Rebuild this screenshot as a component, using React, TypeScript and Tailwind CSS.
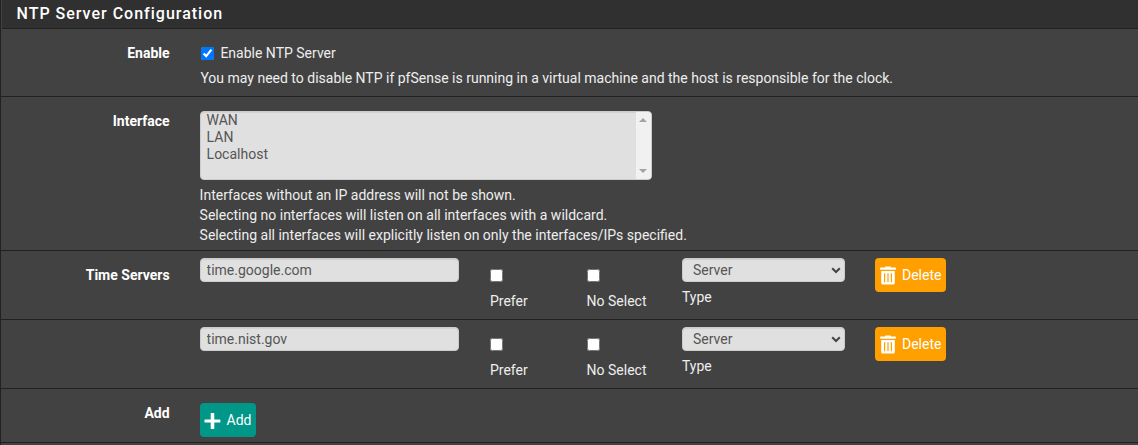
import type { ReactNode } from "react";

const field =
  "border border-[#cccccc] bg-[#e0e0e0] text-[#555555] rounded-[4px] shadow-[inset_0_1px_1px_rgba(0,0,0,0.075)]";

function TrashIcon() {
  return (
    <svg viewBox="0 0 16 19" className="mt-px h-[19px] w-4" fill="currentColor">
      <path
        fillRule="evenodd"
        d="M5 1.4 L5.4 0.6 H10.6 L11 1.4 H15.4 A0.5 0.5 0 0 1 15.9 1.9 V3.3 A0.4 0.4 0 0 1 15.5 3.7 H0.5 A0.4 0.4 0 0 1 0.1 3.3 V1.9 A0.5 0.5 0 0 1 0.6 1.4 Z M1.2 4.9 H14.8 V16.9 A1.7 1.7 0 0 1 13.1 18.6 H2.9 A1.7 1.7 0 0 1 1.2 16.9 Z M4 7.2 V16.2 H5.2 V7.2 Z M7.4 7.2 V16.2 H8.6 V7.2 Z M10.8 7.2 V16.2 H12 V7.2 Z"
      />
    </svg>
  );
}

function PlusIcon() {
  return (
    <svg viewBox="0 0 17 16" className="mt-[2px] h-4 w-[17px]" fill="currentColor">
      <path d="M7.3 0 H9.7 A0.6 0.6 0 0 1 10.3 0.6 V6.4 H15.8 A0.6 0.6 0 0 1 16.4 7 V9 A0.6 0.6 0 0 1 15.8 9.6 H10.3 V15.4 A0.6 0.6 0 0 1 9.7 16 H7.3 A0.6 0.6 0 0 1 6.7 15.4 V9.6 H1.1 A0.6 0.6 0 0 1 0.5 9 V7 A0.6 0.6 0 0 1 1.1 6.4 H6.7 V0.6 A0.6 0.6 0 0 1 7.3 0 Z" />
    </svg>
  );
}

function Row({ label, className, children }: { label?: string; className: string; children: ReactNode }) {
  return (
    <div className={`flex border-b border-[#212121] ${className}`}>
      <div className="w-[168.6px] shrink-0 pt-[14px] text-right font-bold text-white">{label}</div>
      <div className="ml-[30px] flex-1">{children}</div>
    </div>
  );
}

function Check({ label }: { label: string }) {
  return (
    <label className="flex w-[96.6px] flex-col pt-[11px]">
      <input type="checkbox" className="m-0 size-[13px]" />
      <span className="mt-[9px]">{label}</span>
    </label>
  );
}

function TimeServer({ label, host }: { label?: string; host: string }) {
  return (
    <Row label={label} className="h-[69px]">
      <div className="flex pt-[7px]">
        <input defaultValue={host} className={`h-6 w-[259.4px] px-[6px] ${field}`} />
        <div className="ml-[31px] flex">
          <Check label="Prefer" />
          <Check label="No Select" />
        </div>
        <div className="-ml-[1.2px] w-[163px]">
          <div className="grid">
            <select className={`col-start-1 row-start-1 h-6 appearance-none pl-[10px] leading-[20px] ${field}`}>
              <option>Server</option>
              <option>Pool</option>
              <option>Peer</option>
            </select>
            <svg
              viewBox="0 0 10 7"
              className="pointer-events-none col-start-1 row-start-1 mr-[4px] h-[7px] w-[10px] self-center justify-self-end"
            >
              <path d="M1.2 1.2 L5 5 L8.8 1.2" fill="none" stroke="#444444" strokeWidth="2" />
            </svg>
          </div>
          <div className="mt-[5px]">Type</div>
        </div>
        <button className="ml-[30px] flex h-[34px] w-[71px] items-center rounded-[4px] bg-[#ffa000] pl-[5px] text-white">
          <TrashIcon />
          <span className="ml-[6px]">Delete</span>
        </button>
      </div>
    </Row>
  );
}

export default function App() {
  return (
    <div className="h-[445px] overflow-hidden border-l border-[#212121] bg-[#424242] font-['Roboto',sans-serif] text-[14px] leading-[20px] text-[#eeeeee]">
      <h2 className="ml-px flex h-[29px] items-center border-b border-[#212121] bg-[#303030] pl-[14.5px] text-[16px] font-medium tracking-[1px] text-white">
        NTP Server Configuration
      </h2>

      <Row label="Enable" className="h-[68px]">
        <label className="flex items-center pt-[14px]">
          <input type="checkbox" defaultChecked className="m-0 ml-px size-[13px]" />
          <span className="ml-[6.8px]">Enable NTP Server</span>
        </label>
        <p className="ml-[0.8px] mt-[5px]">
          You may need to disable NTP if pfSense is running in a virtual machine and the host is responsible for the
          clock.
        </p>
      </Row>

      <Row label="Interface" className="h-[154px]">
        <div className={`mt-[14px] flex h-[69px] w-[452px] overflow-hidden ${field}`}>
          <ul className="flex-1 pl-[6px] leading-[17px]">
            <li>WAN</li>
            <li>LAN</li>
            <li>Localhost</li>
          </ul>
          <div className="flex w-[15px] flex-col items-center justify-between bg-[#f1f1f1] pb-[6px] pt-[6px]">
            <svg viewBox="0 0 8 4" className="h-1 w-2">
              <path d="M4 0 L8 4 H0 Z" fill="#a3a3a3" />
            </svg>
            <svg viewBox="0 0 8 4" className="h-1 w-2">
              <path d="M4 4 L8 0 H0 Z" fill="#a3a3a3" />
            </svg>
          </div>
        </div>
        <p className="mt-[5px]">
          Interfaces without an IP address will not be shown.
          <br />
          Selecting no interfaces will listen on all interfaces with a wildcard.
          <br />
          Selecting all interfaces will explicitly listen on only the interfaces/IPs specified.
        </p>
      </Row>

      <TimeServer label="Time Servers" host="time.google.com" />
      <TimeServer host="time.nist.gov" />

      <Row label="Add" className="h-[54px]">
        <button className="mt-[14px] flex h-[34px] w-[56px] items-center rounded-[4px] bg-[#009688] pl-[4px] text-white">
          <PlusIcon />
          <span className="ml-[6px]">Add</span>
        </button>
      </Row>
    </div>
  );
}
